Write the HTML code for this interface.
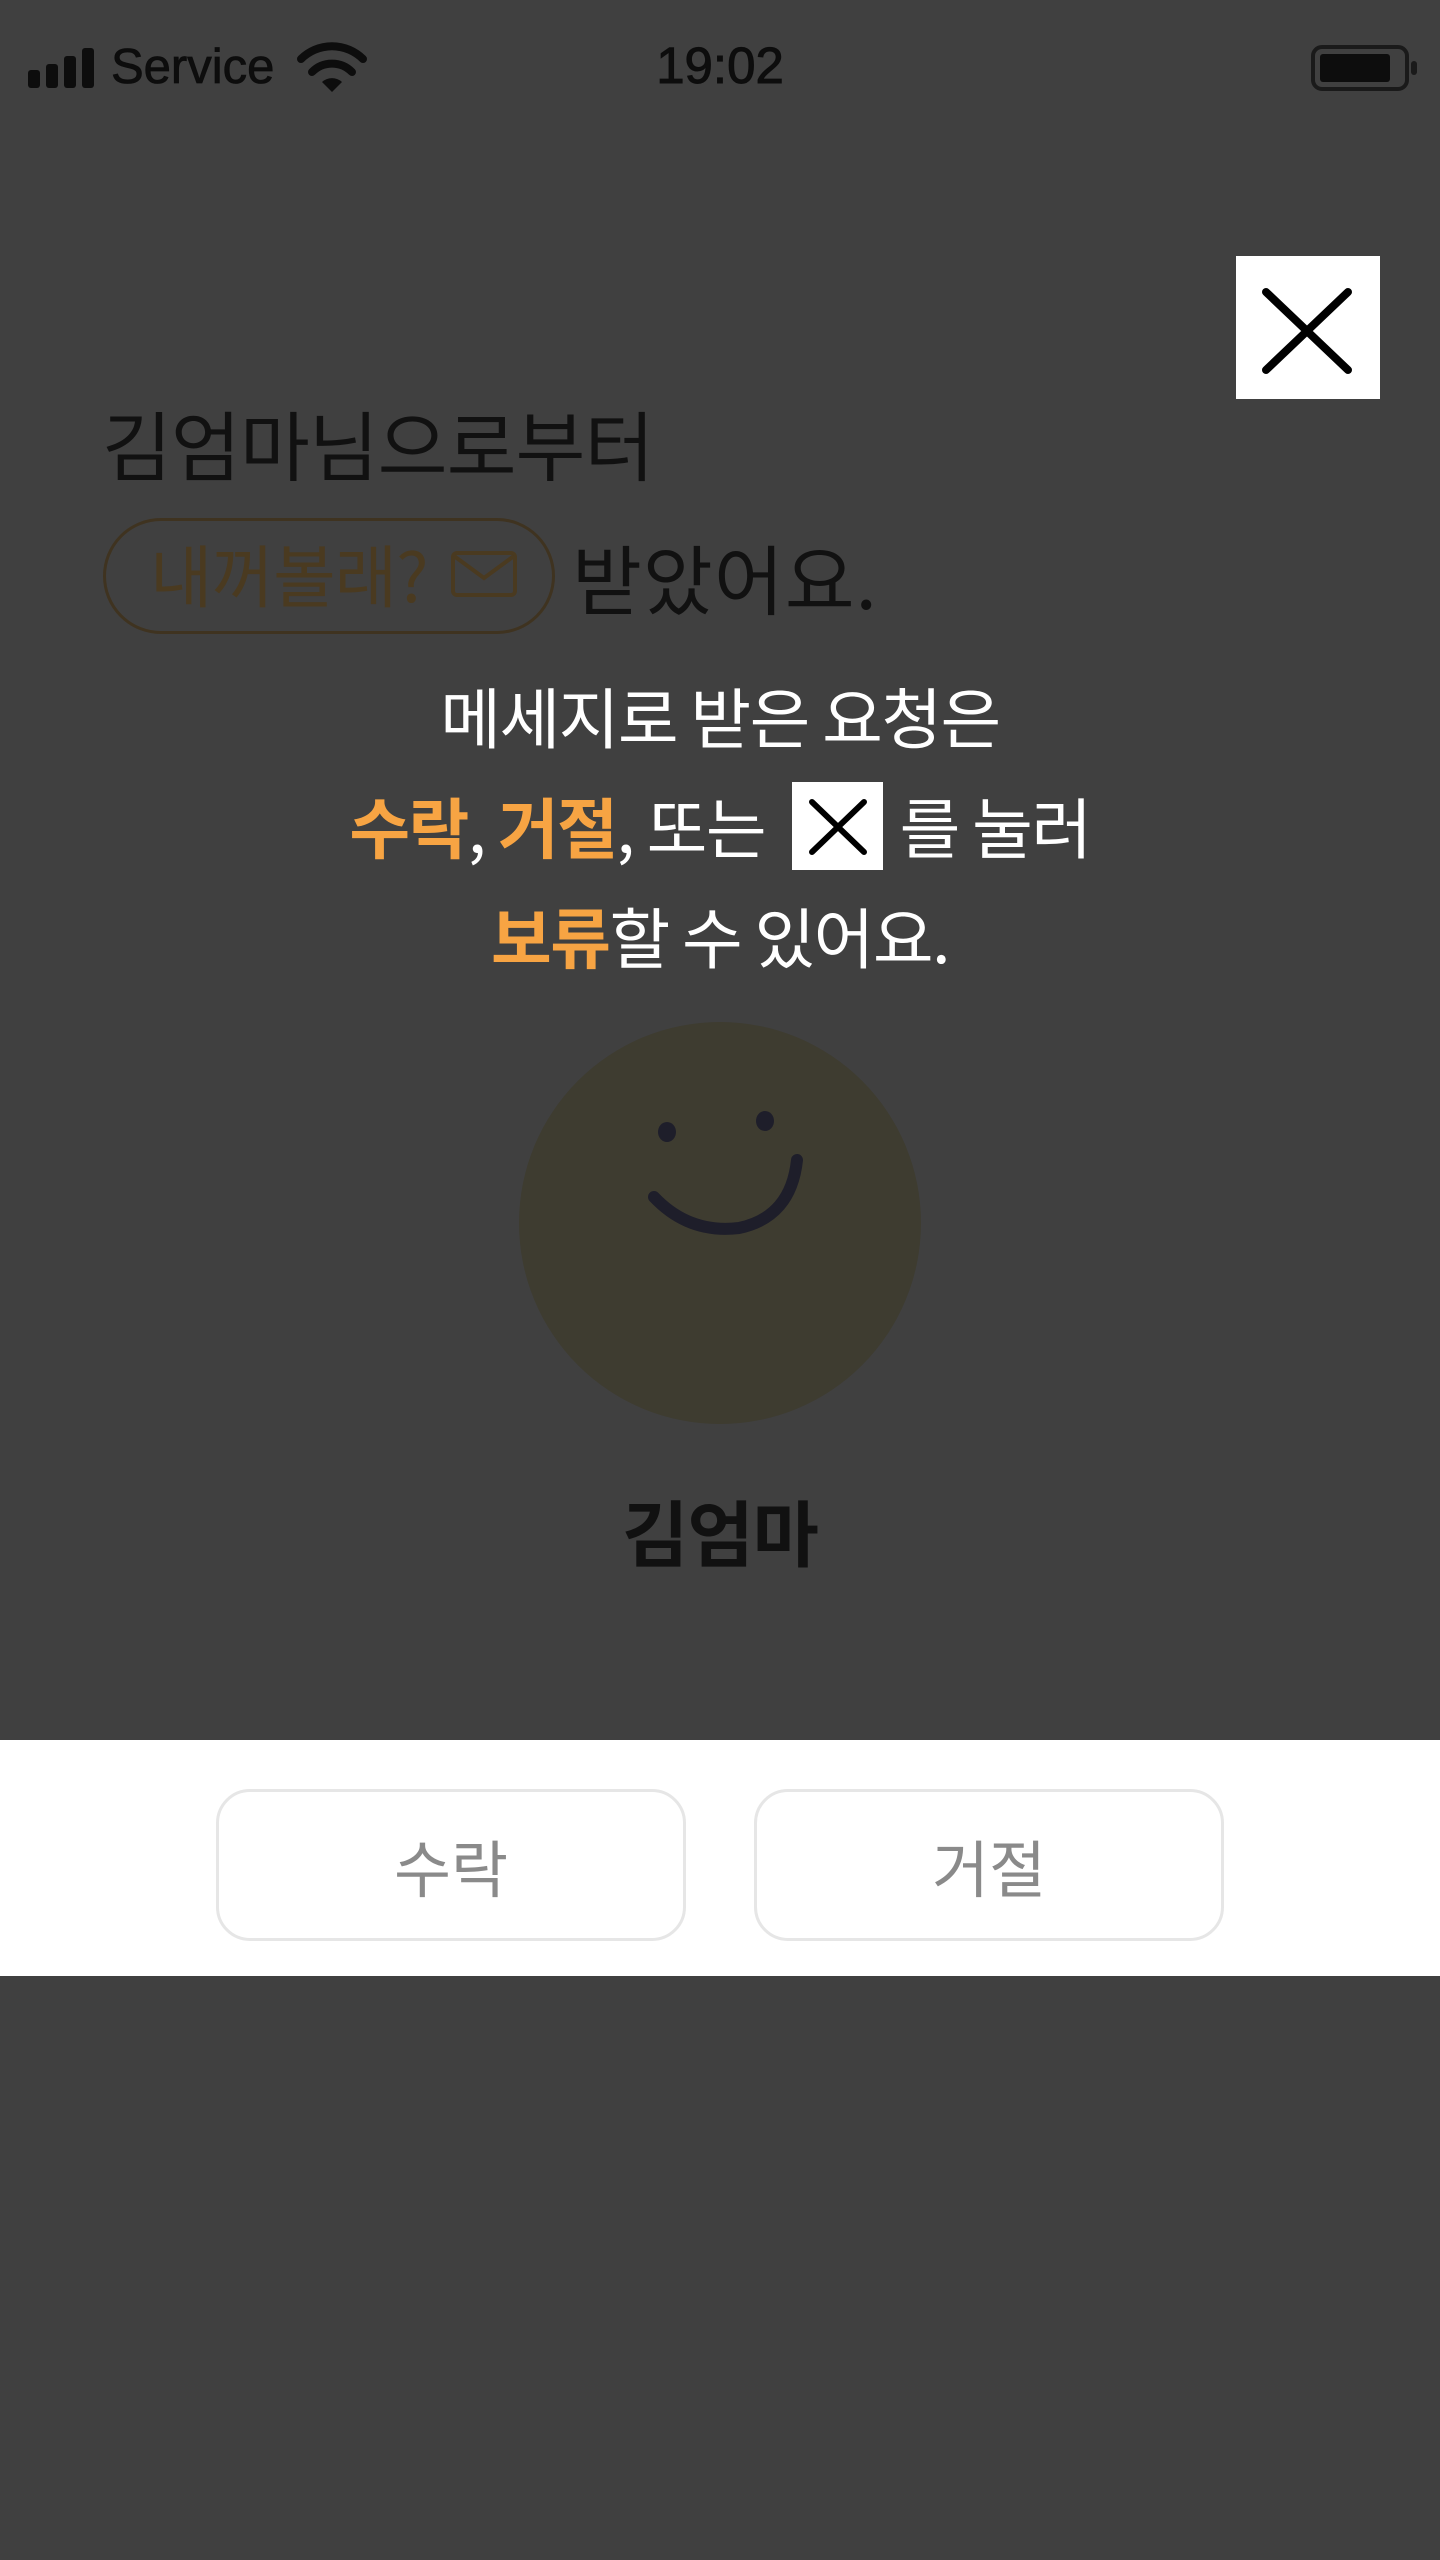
<!DOCTYPE html>
<html><head><meta charset="utf-8">
<style>
html,body{margin:0;padding:0;}
body{width:1440px;height:2560px;background:#404040;position:relative;overflow:hidden;font-family:"Liberation Sans","Noto Sans CJK KR",sans-serif;}
.abs{position:absolute;}
.k{font-family:"Noto Sans CJK KR","Liberation Sans",sans-serif;}
.o{color:#f7a443;font-weight:700;}
</style></head><body>
<!-- status bar -->
<svg class="abs" style="left:28px;top:46px" width="70" height="44">
<rect x="0" y="24" width="12" height="18" rx="3" fill="#0d0d0d"/>
<rect x="18" y="18" width="12" height="24" rx="3" fill="#0d0d0d"/>
<rect x="36" y="10" width="12" height="32" rx="3" fill="#0d0d0d"/>
<rect x="54" y="2" width="12" height="40" rx="3" fill="#0d0d0d"/>
</svg>
<div class="abs" style="left:111px;top:38px;font-size:49px;color:#0d0d0d;line-height:58px;-webkit-text-stroke:0.8px #0d0d0d">Service</div>
<svg class="abs" style="left:296px;top:42px" width="72" height="52" viewBox="0 0 72 52">
<path d="M36 50 L26 40 A15 15 0 0 1 46 40 Z" fill="#0d0d0d"/>
<path d="M16 30 A28 28 0 0 1 56 30" stroke="#0d0d0d" stroke-width="8" fill="none" stroke-linecap="round"/>
<path d="M5 17 A44 44 0 0 1 67 17" stroke="#0d0d0d" stroke-width="8" fill="none" stroke-linecap="round"/>
</svg>
<div class="abs" style="left:620px;top:36px;width:200px;text-align:center;font-size:51px;color:#0d0d0d;line-height:60px;-webkit-text-stroke:1px #0d0d0d">19:02</div>
<svg class="abs" style="left:1310px;top:44px" width="110" height="50">
<rect x="3" y="3" width="94" height="42" rx="9" fill="none" stroke="#1a1a1a" stroke-width="4"/>
<rect x="10" y="10" width="70" height="28" rx="3" fill="#0d0d0d"/>
<rect x="101" y="17" width="6" height="14" rx="3" fill="#1a1a1a"/>
</svg>
<!-- close button -->
<div class="abs" style="left:1236px;top:256px;width:144px;height:143px;background:#fff"></div>
<svg class="abs" style="left:1236px;top:256px" width="144" height="143">
<path d="M30 36 L112 114 M112 36 L30 114" stroke="#000" stroke-width="8" stroke-linecap="round"/>
</svg>
<!-- title -->
<div class="abs k" style="left:102px;top:392px;font-size:76px;color:#111;line-height:100px;letter-spacing:-1px;font-weight:400">김엄마님으로부터</div>
<div class="abs" style="left:103px;top:518px;width:446px;height:110px;border:3px solid #3f3320;border-radius:58px"></div>
<div class="abs k" style="left:150px;top:525px;font-size:68px;color:#4a3a20;line-height:96px;letter-spacing:-1px;font-weight:400">내꺼볼래?</div>
<svg class="abs" style="left:450px;top:550px" width="70" height="50">
<rect x="3" y="3" width="62" height="42" rx="4" fill="none" stroke="#4a3a20" stroke-width="4"/>
<path d="M4 6 L34 28 L64 6" fill="none" stroke="#4a3a20" stroke-width="4"/>
</svg>
<div class="abs k" style="left:572px;top:526px;font-size:76px;color:#111;line-height:100px;letter-spacing:1px;font-weight:400">받았어요.</div>
<!-- white text -->
<div class="abs k" style="left:0;top:675px;width:1440px;text-align:center;font-size:66px;color:#fff;line-height:80px;letter-spacing:-1.5px">메세지로 받은 요청은</div>
<div class="abs k" style="left:0;top:785px;width:1440px;text-align:center;font-size:66px;color:#fff;line-height:80px;letter-spacing:-1.5px"><span class="o">수락</span>, <span class="o">거절</span>, 또는 <span style="display:inline-block;width:92px;height:88px;vertical-align:-20px;margin:0 8px"></span> 를 눌러</div>
<div class="abs" style="left:792px;top:782px;width:91px;height:88px;background:#fff"></div>
<svg class="abs" style="left:792px;top:782px" width="91" height="88">
<path d="M20 20 L72 70 M72 20 L20 70" stroke="#000" stroke-width="6" stroke-linecap="round"/>
</svg>
<div class="abs k" style="left:0;top:895px;width:1440px;text-align:center;font-size:66px;color:#fff;line-height:80px;letter-spacing:-1.5px"><span class="o">보류</span>할 수 있어요.</div>
<!-- avatar -->
<div class="abs" style="left:519px;top:1022px;width:402px;height:402px;border-radius:50%;background:#3e3c30"></div>
<svg class="abs" style="left:519px;top:1022px" width="402" height="402">
<ellipse cx="148" cy="110" rx="9" ry="10" fill="#1e1e2a"/>
<ellipse cx="246" cy="99" rx="9" ry="10" fill="#1e1e2a"/>
<path d="M135 175 Q170 212 220 206 Q272 195 278 138" fill="none" stroke="#1e1e2a" stroke-width="12" stroke-linecap="round"/>
</svg>
<div class="abs k" style="left:0;top:1485px;width:1440px;text-align:center;font-size:72px;color:#111;line-height:90px;font-weight:700;letter-spacing:-1px">김엄마</div>
<!-- bottom -->
<div class="abs" style="left:0;top:1740px;width:1440px;height:236px;background:#fff"></div>
<div class="abs k" style="left:216px;top:1789px;width:464px;height:146px;border:3px solid #e6e6e6;border-radius:34px;text-align:center;line-height:146px;font-size:62px;color:#8a8a8a">수락</div>
<div class="abs k" style="left:754px;top:1789px;width:464px;height:146px;border:3px solid #e6e6e6;border-radius:34px;text-align:center;line-height:146px;font-size:62px;color:#8a8a8a">거절</div>
</body></html>
